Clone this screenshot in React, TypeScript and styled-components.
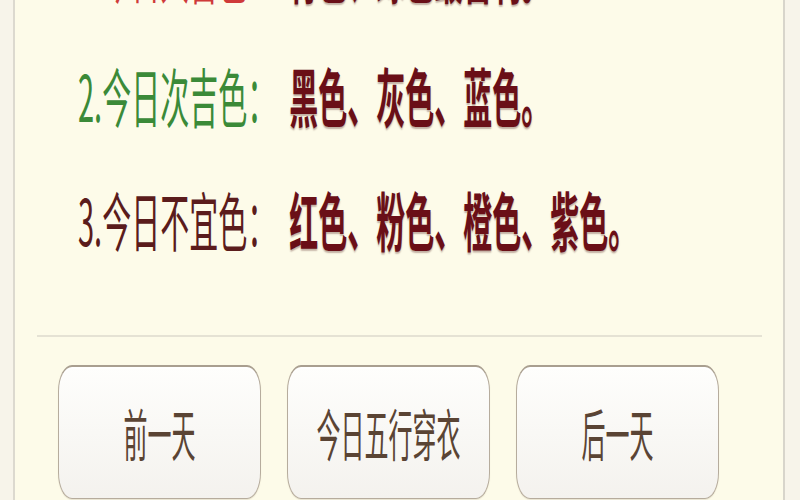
import React from "react";
import styled, { createGlobalStyle } from "styled-components";

const GlobalStyle = createGlobalStyle`
  html, body {
    margin: 0;
    padding: 0;
    background: #f7f4ea;
    overflow: hidden;
  }
  body {
    font-family: "Noto Sans CJK SC", "Noto Sans", sans-serif;
  }
`;

const Page = styled.div`
  width: 800px;
  height: 500px;
  padding: 0 15px 0 13px;
  box-sizing: border-box;
  overflow: hidden;
  background: #f7f4ea;
`;

const Panel = styled.section`
  height: 500px;
  box-sizing: border-box;
  border-left: 2px solid #dcd9cf;
  border-right: 2px solid #d8d5cb;
  background: #fdfbe9;
  padding: 0 21px 0 22px;
  overflow: hidden;
  display: flex;
  flex-direction: column;
`;

const ColorList = styled.div`
  margin-top: -92px;
  padding-left: 41px;
  display: flex;
  flex-direction: column;
`;

const Row = styled.div`
  height: 124px;
  display: flex;
  align-items: center;
  font-size: 29px;
  line-height: 29px;
  white-space: nowrap;
`;

/* tall, narrow lettering of the app's display */
const Tall = styled.span<{ $scale?: number }>`
  display: inline-block;
  transform: scaleY(${(p) => p.$scale ?? 2.2});
  transform-origin: 50% 50%;
`;

const Label = styled(Tall)<{ $tone: string }>`
  color: ${(p) => p.$tone};
  font-weight: 400;
`;

const Colors = styled(Tall)`
  margin-left: 13px;
  color: #6a0f17;
  font-weight: 700;
  text-shadow: 0 1px 1px rgba(60, 0, 0, 0.3);
`;

const Divider = styled.hr`
  margin: 55px 0 0;
  border: none;
  height: 2px;
  background: #e5e2d4;
`;

const ButtonBar = styled.div`
  margin-top: 28px;
  padding-left: 21px;
  display: grid;
  grid-template-columns: repeat(3, 203px);
  column-gap: 26px;
`;

const DayButton = styled.button`
  height: 134px;
  box-sizing: border-box;
  border: 1.5px solid #b6ac9d;
  border-top: 2.5px solid #a99f90;
  border-radius: 14px / 26px;
  background: linear-gradient(#fefefc, #f4f2ee);
  box-shadow: inset 0 2px 0 #ffffff, 0 1px 1px rgba(120, 100, 70, 0.15);
  font-family: "Noto Sans CJK SC", "Noto Sans", sans-serif;
  font-size: 24px;
  line-height: 24px;
  color: #5a4434;
  padding: 0;
  display: flex;
  align-items: center;
  justify-content: center;
  cursor: pointer;
`;

const rows = [
  { label: "1.今日大吉色：", tone: "#cf3a3a", colors: "青色、绿色最吉利。" },
  { label: "2.今日次吉色：", tone: "#3b8a38", colors: "黑色、灰色、蓝色。" },
  { label: "3.今日不宜色：", tone: "#5b1c1c", colors: "红色、粉色、橙色、紫色。" },
];

const buttons = ["前一天", "今日五行穿衣", "后一天"];

export default function App() {
  return (
    <>
      <GlobalStyle />
      <Page>
        <Panel>
          <ColorList>
            {rows.map((r) => (
              <Row key={r.label}>
                <Label $tone={r.tone}>{r.label}</Label>
                <Colors>{r.colors}</Colors>
              </Row>
            ))}
          </ColorList>
          <Divider />
          <ButtonBar>
            {buttons.map((b) => (
              <DayButton key={b}>
                <Tall $scale={2.3}>{b}</Tall>
              </DayButton>
            ))}
          </ButtonBar>
        </Panel>
      </Page>
    </>
  );
}
